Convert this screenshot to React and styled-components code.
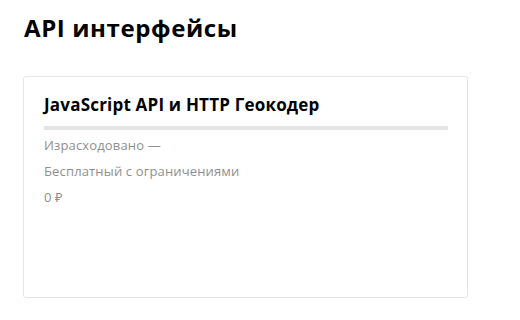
import React from "react";
import styled, { createGlobalStyle } from "styled-components";

const Global = createGlobalStyle`
  html, body { margin: 0; padding: 0; background: #fff; }
  body { font-family: "Open Sans", "Noto Sans", sans-serif; color: #000; }
`;

const Page = styled.div`
  padding: 13px 0 0 23px;
  width: 445px;
`;

const Heading = styled.h1`
  margin: 0 0 0 1px;
  font-size: 24px;
  line-height: 30px;
  font-weight: 700;
  letter-spacing: 0.6px;
`;

const Card = styled.section`
  box-sizing: border-box;
  margin-top: 33px;
  width: 445px;
  height: 222px;
  border: 1px solid #e6e6e6;
  border-radius: 3px;
  padding: 16px 19px 0 20px;
  display: flex;
  flex-direction: column;
`;

const CardTitle = styled.h2`
  margin: 0;
  font-size: 17px;
  line-height: 24px;
  font-weight: 700;
  letter-spacing: 0.2px;
`;

const Progress = styled.div`
  margin-top: 9px;
  height: 4px;
  background: #e5e5e5;
`;

const Info = styled.div`
  margin-top: 2px;
  display: flex;
  flex-direction: column;
`;

const Line = styled.div`
  font-size: 13px;
  line-height: 26px;
  color: #8f8f8f;
  letter-spacing: 0.15px;
`;

export default function App() {
  return (
    <>
      <Global />
      <Page>
        <Heading>API интерфейсы</Heading>
        <Card>
          <CardTitle>JavaScript API и HTTP Геокодер</CardTitle>
          <Progress />
          <Info>
            <Line>Израсходовано —</Line>
            <Line>Бесплатный с ограничениями</Line>
            <Line>0 ₽</Line>
          </Info>
        </Card>
      </Page>
    </>
  );
}
